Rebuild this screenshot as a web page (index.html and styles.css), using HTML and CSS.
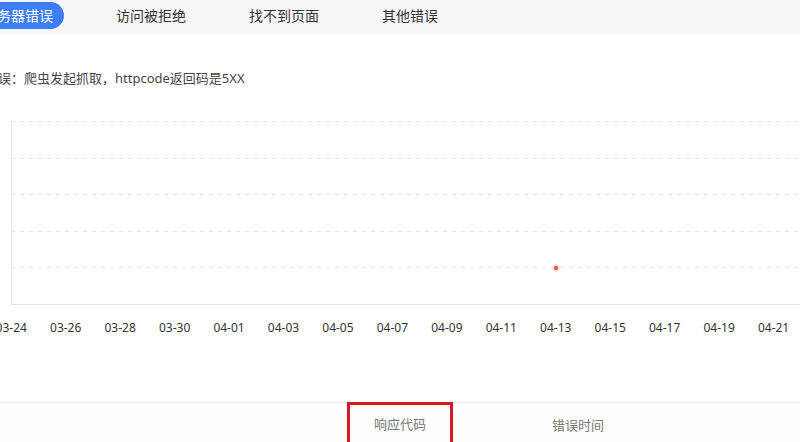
FILE: index.html
```html
<!DOCTYPE html>
<html lang="zh-CN">
<head>
  <meta charset="UTF-8" />
  <title>抓取异常</title>
  <link rel="stylesheet" href="styles.css">
</head>
<body>

  <nav class="tabs">
    <span class="tab activo">服务器错误</span>
    <span class="tab">访问被拒绝</span>
    <span class="tab">找不到页面</span>
    <span class="tab">其他错误</span>
  </nav>

  <p class="descripcion">服务器错误：爬虫发起抓取，httpcode返回码是5XX</p>

  <div class="grafico">
    <svg width="820" height="186" viewBox="0 0 820 186">
      <g stroke="#e2e2e2" stroke-width="1" stroke-dasharray="4 5">
        <line x1="0" y1="1.5" x2="820" y2="1.5" />
        <line x1="0" y1="38.5" x2="820" y2="38.5" />
        <line x1="0" y1="74.5" x2="820" y2="74.5" />
        <line x1="0" y1="111.5" x2="820" y2="111.5" />
        <line x1="0" y1="147.5" x2="820" y2="147.5" />
      </g>
      <line x1="0.5" y1="0" x2="0.5" y2="184" stroke="#ebebeb" />
      <line x1="0" y1="184.5" x2="820" y2="184.5" stroke="#e3e3e3" />
      <circle cx="545" cy="148" r="4" fill="#fbe3df" />
      <circle cx="545" cy="148" r="2.2" fill="#e8604c" />
    </svg>
  </div>

  <div class="fechas">
    <span>03-24</span><span>03-26</span><span>03-28</span><span>03-30</span>
    <span>04-01</span><span>04-03</span><span>04-05</span><span>04-07</span>
    <span>04-09</span><span>04-11</span><span>04-13</span><span>04-15</span>
    <span>04-17</span><span>04-19</span><span>04-21</span>
  </div>

  <div class="tabla-cabecera">
    <div class="celda"></div>
    <div class="celda marcada">响应代码</div>
    <div class="celda">错误时间</div>
    <div class="celda"></div>
  </div>

</body>
</html>
```

FILE: styles.css
```css
body {
  margin: 0;
  font-family: "Noto Sans", "Noto Sans CJK SC", sans-serif;
  background-color: #fff;
  color: #333;
  overflow: hidden;
  height: 442px;
}

.tabs {
  display: flex;
  gap: 41px;
  height: 34px;
  padding-top: 2px;
  box-sizing: border-box;
  margin-left: -28px;
  background-color: #f7f7f7;
}

.tab {
  height: 27px;
  line-height: 27px;
  padding: 0 11px;
  font-size: 14px;
  color: #333;
  border-radius: 14px;
  white-space: nowrap;
}

.tab.activo {
  background-color: #3d7ef4;
  color: #fff;
}

.descripcion {
  margin: 34px 0 0 -54px;
  font-size: 13px;
  line-height: 20px;
  color: #444;
  white-space: nowrap;
}

.grafico {
  margin: 32px 0 0 11px;
  height: 186px;
}

.grafico svg {
  display: block;
}

.fechas {
  display: flex;
  margin: 14px 0 0 -16px;
  white-space: nowrap;
}

.fechas span {
  flex: 0 0 54.46px;
  text-align: center;
  font-size: 12px;
  line-height: 16px;
  color: #333;
}

.tabla-cabecera {
  display: grid;
  grid-template-columns: 347px 106px 250px 1fr;
  margin-top: 66px;
  height: 40px;
  border-top: 1px solid #efefef;
  border-bottom: 1px solid #efefef;
  background-color: #fdfdfd;
}

.celda {
  display: flex;
  align-items: center;
  justify-content: center;
  font-size: 13px;
  color: #777;
}

.celda.marcada {
  box-shadow: inset 0 0 0 3px #d51a1f;
  margin-top: -1px;
  height: 43px;
}
```
